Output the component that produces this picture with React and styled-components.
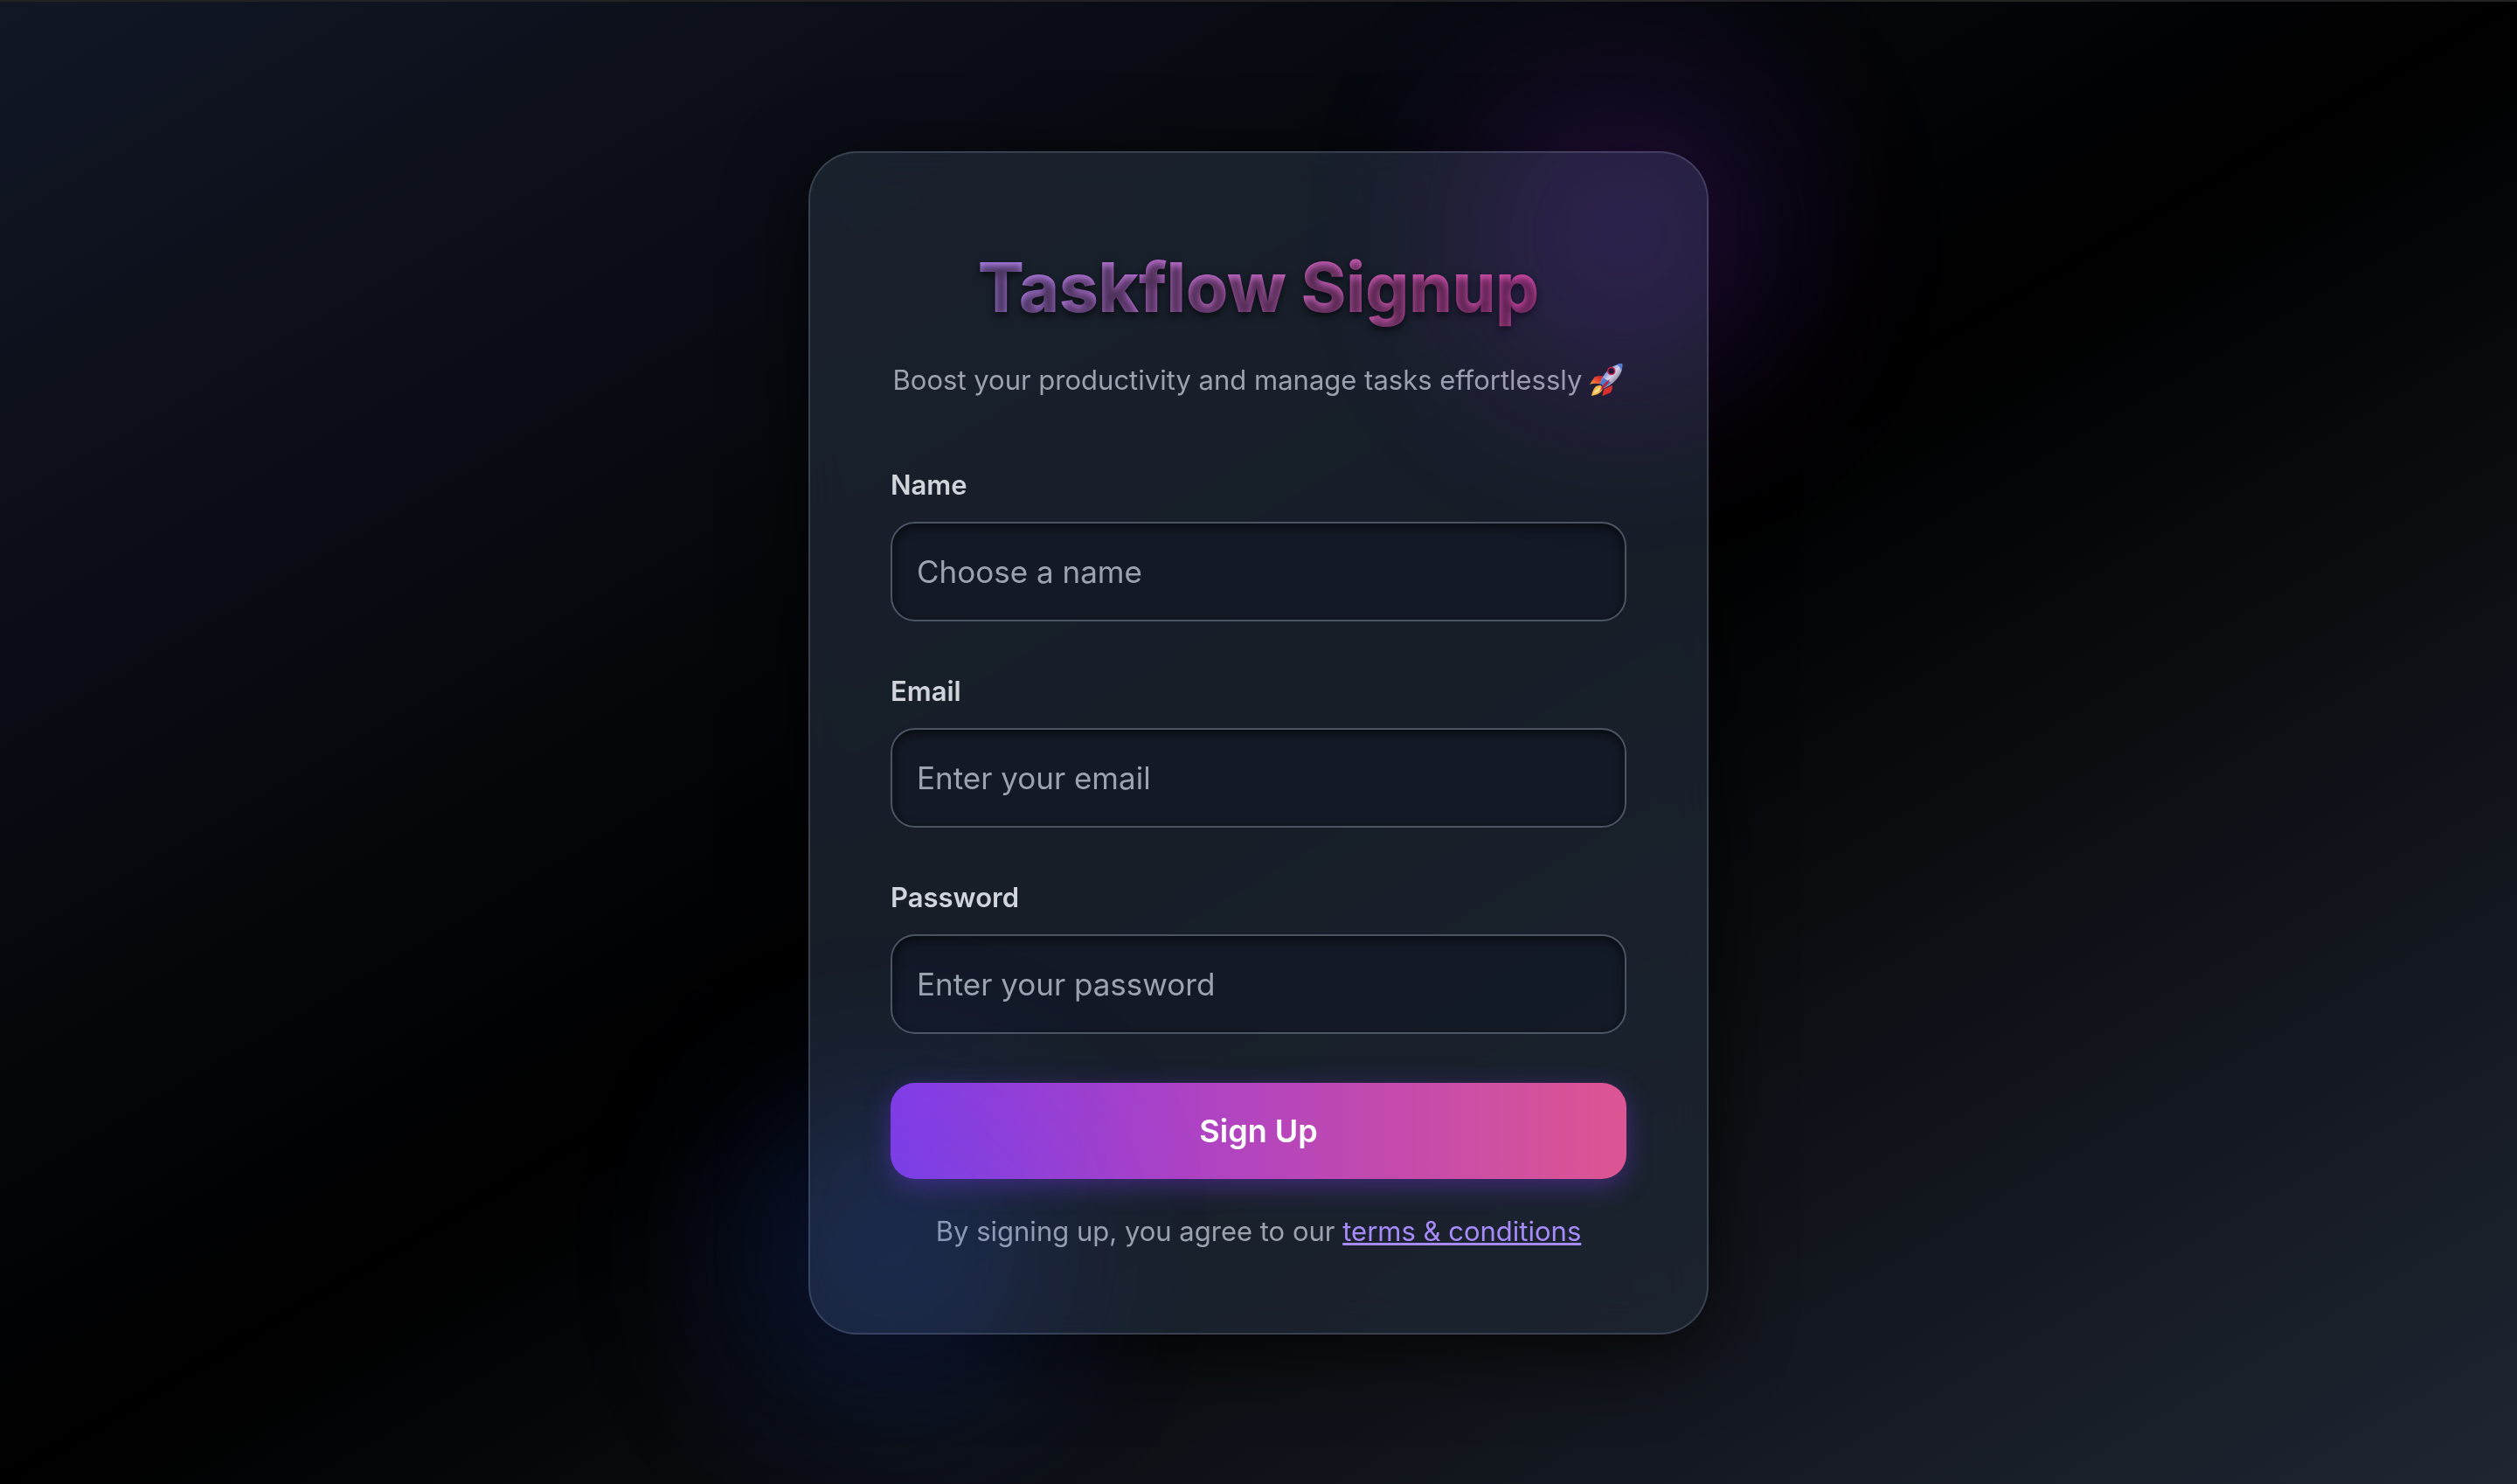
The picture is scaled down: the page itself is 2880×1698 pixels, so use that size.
import React from "react";
import styled, { createGlobalStyle } from "styled-components";

const GlobalStyle = createGlobalStyle`
  *, *::before, *::after { box-sizing: border-box; }
  body {
    margin: 0;
    background: #000;
    font-family: Inter, "Liberation Sans", sans-serif;
  }
`;

const Page = styled.main`
  min-height: 100vh;
  display: flex;
  align-items: center;
  justify-content: center;
  padding: 48px;
  border-top: 2px solid #222222;
  background: linear-gradient(to bottom right, #121726, #000000, #1f2632) padding-box;
`;

const Stage = styled.div`
  position: relative;
  width: 100%;
  max-width: 1030px;
`;

const Card = styled.section`
  padding: 88px 92px;
  border: 2px solid rgba(78, 86, 102, 0.6);
  border-radius: 56px;
  background: rgba(31, 40, 53, 0.75);
  box-shadow: 0 20px 90px rgba(0, 0, 0, 0.7);
  backdrop-filter: blur(24px);
`;

const Glow = styled.div`
  position: absolute;
  width: 320px;
  height: 320px;
  border-radius: 50%;
  opacity: 0.26;
  filter: blur(112px);
  pointer-events: none;
`;

const PurpleGlow = styled(Glow)`
  top: -64px;
  right: -64px;
  background: #9333ea;
`;

const BlueGlow = styled(Glow)`
  bottom: -64px;
  left: -64px;
  background: #2f5ce8;
`;

const Title = styled.h1`
  margin: 0 0 12px;
  font-size: 78px;
  line-height: 132px;
  font-weight: 800;
  text-align: center;
  color: transparent;
  background: linear-gradient(to right, #a78bfa, #ec4899);
  background-clip: text;
  -webkit-background-clip: text;
  text-shadow: 0 4px 8px rgba(0, 0, 0, 0.6);
`;

const Subtitle = styled.p`
  display: flex;
  align-items: center;
  justify-content: center;
  gap: 8px;
  margin: 0 0 64px;
  font-size: 31px;
  line-height: 56px;
  color: #9ca3af;
  white-space: nowrap;
`;

const RocketIcon = styled.svg`
  width: 40px;
  height: 40px;
  flex: none;
`;

const Form = styled.form`
  display: flex;
  flex-direction: column;
  gap: 56px;
`;

const Fields = styled.div`
  display: flex;
  flex-direction: column;
  gap: 52px;
`;

const Field = styled.div`
  display: flex;
  flex-direction: column;
  gap: 14px;
`;

const Label = styled.label`
  font-size: 31px;
  line-height: 56px;
  font-weight: 600;
  color: #d1d5db;
`;

const Input = styled.input`
  width: 100%;
  height: 114px;
  padding: 0 28px;
  border: 2px solid #4b5563;
  border-radius: 28px;
  background: rgba(17, 22, 36, 0.6);
  box-shadow: inset 0 4px 12px rgba(0, 0, 0, 0.6);
  font: inherit;
  font-size: 35px;
  color: #ffffff;
  outline: none;

  &::placeholder {
    color: #9ca3af;
    opacity: 1;
  }
`;

const SubmitButton = styled.button`
  height: 110px;
  border: 0;
  border-radius: 28px;
  background: linear-gradient(to right, #873ae6, #b545bd, #dd5592);
  box-shadow: 0 8px 30px rgba(124, 58, 237, 0.4);
  font: inherit;
  font-size: 36px;
  font-weight: 600;
  color: #ffffff;
  cursor: pointer;
`;

const Terms = styled.p`
  margin: 32px 0 0;
  font-size: 31px;
  line-height: 56px;
  text-align: center;
  color: #9ca3af;
`;

const TermsLink = styled.a`
  color: #a78bfa;
  text-decoration: underline;
`;

function Rocket() {
  return (
    <RocketIcon viewBox="0 0 42 42" role="img" aria-label="rocket">
      <defs>
        <linearGradient id="hull" x1="0" y1="0" x2="1" y2="1">
          <stop offset="0.25" stopColor="#4f86cf" />
          <stop offset="0.5" stopColor="#dfe3ea" />
          <stop offset="0.75" stopColor="#7d828c" />
        </linearGradient>
        <linearGradient id="fin" x1="0" y1="1" x2="1" y2="0">
          <stop offset="0" stopColor="#ffb52e" />
          <stop offset="0.5" stopColor="#ee4a22" />
          <stop offset="1" stopColor="#b91d1d" />
        </linearGradient>
      </defs>
      <path d="M1 26 L7 17 Q12 15 18 16 L13 26 Q8 24 1 26Z" fill="url(#fin)" />
      <path d="M16 40 L18 32 L28 27 Q29 31 26 36 Q21 38 16 40Z" fill="#e0301f" />
      <path d="M13 26 Q17 12 28 5 Q35 1 40 1 Q41 8 37 15 Q31 25 18 31Z" fill="url(#hull)" />
      <path d="M33 2 Q37 1 40 1 Q41 5 39 10 Q38 5 33 2Z" fill="#4c83d6" />
      <path d="M13 26 L17 18 L27 24 L18 31Z" fill="#4a80c9" />
      <circle cx="27" cy="10" r="5" fill="#cf2734" />
      <circle cx="27" cy="10" r="3.4" fill="#16152b" />
      <path d="M10 25 L15 26 L18 30 L15 31Z" fill="#20263c" />
      <path d="M3 40 Q5 31 9 28 L14 27 L17 31 Q15 36 10 38 Q6 39 3 40Z" fill="#ffc83a" />
      <path d="M6 37 Q8 32 13 30 L14 32 Q10 36 6 37Z" fill="#fff0a0" />
      <path d="M13 34 Q18 24 25 20 Q23 28 13 34Z" fill="#c3222a" />
    </RocketIcon>
  );
}

const fields = [
  { id: "name", label: "Name", type: "text", placeholder: "Choose a name" },
  { id: "email", label: "Email", type: "email", placeholder: "Enter your email" },
  { id: "password", label: "Password", type: "password", placeholder: "Enter your password" },
];

export default function App() {
  return (
    <>
      <GlobalStyle />
      <Page>
        <Stage>
          <Card>
            <Title>Taskflow Signup</Title>
            <Subtitle>
              Boost your productivity and manage tasks effortlessly
              <Rocket />
            </Subtitle>
            <Form onSubmit={(event) => event.preventDefault()}>
              <Fields>
                {fields.map((field) => (
                  <Field key={field.id}>
                    <Label htmlFor={field.id}>{field.label}</Label>
                    <Input id={field.id} type={field.type} placeholder={field.placeholder} />
                  </Field>
                ))}
              </Fields>
              <SubmitButton type="submit">Sign Up</SubmitButton>
            </Form>
            <Terms>
              By signing up, you agree to our <TermsLink href="#terms">terms &amp; conditions</TermsLink>
            </Terms>
          </Card>
          <PurpleGlow />
          <BlueGlow />
        </Stage>
      </Page>
    </>
  );
}
